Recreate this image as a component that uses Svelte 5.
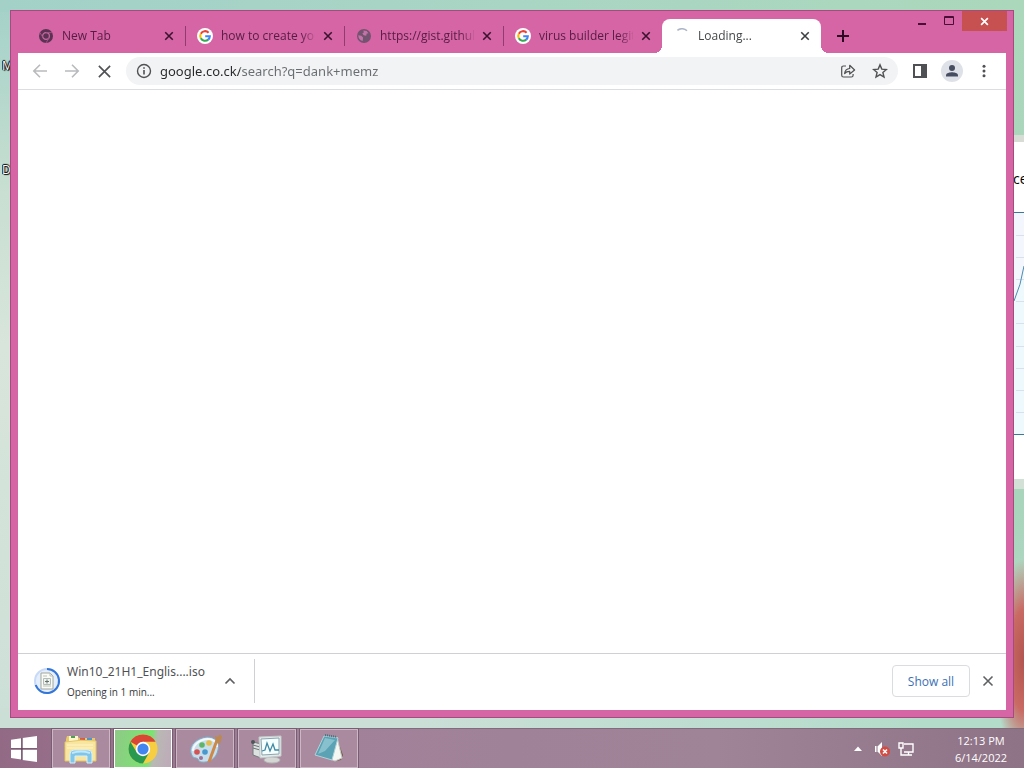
<script lang="ts">
    const tabs = [
        { title: 'New Tab', icon: 'chrome' },
        { title: 'how to create your', icon: 'google' },
        { title: 'https://gist.github', icon: 'globe' },
        { title: 'virus builder legit', icon: 'google' },
        { title: 'Loading...', icon: 'spinner' },
    ];

    let active = $state(4);
    let address = $state('google.co.ck/search?q=dank+memz');

    const apps = ['File Explorer', 'Google Chrome', 'Paint', 'Task Manager', 'Notepad'];
    const gridLines = [235, 257, 279, 301, 323, 346, 368, 390, 412];
</script>

{#snippet cross(size: number, width: number)}
    <svg width={size} height={size} viewBox="0 0 12 12" fill="none" stroke="currentColor" stroke-width={width}>
        <path d="M1.5 1.5l9 9M10.5 1.5l-9 9" />
    </svg>
{/snippet}

{#snippet favicon(name: string)}
    <svg class="favicon" width="16" height="16" viewBox="0 0 16 16" fill="none">
        {#if name === 'chrome'}
            <circle cx="8" cy="8" r="7" fill="#5b3254" />
            <circle cx="8" cy="8" r="3.4" stroke="#c76aa2" stroke-width="1.2" />
            <path d="M8 4.6h6.2M5 9.7L2 4.6M11 9.7L8 15" stroke="#a65588" stroke-width="0.9" />
        {:else if name === 'google'}
            <circle cx="8" cy="8" r="8" fill="#fff" />
            <g stroke-width="2.1">
                <path d="M11.6 4.7A4.8 4.8 0 0 0 3.8 5.7" stroke="#ea4335" />
                <path d="M3.8 5.7A4.8 4.8 0 0 0 3.8 10.3" stroke="#fbbc05" />
                <path d="M3.8 10.3A4.8 4.8 0 0 0 11.2 11.6" stroke="#34a853" />
                <path d="M11.2 11.6A4.8 4.8 0 0 0 12.8 8.2H8.2" stroke="#4285f4" />
            </g>
        {:else if name === 'globe'}
            <circle cx="8" cy="8" r="7" fill="#73536f" />
            <path d="M2.3 7.2l3 .5 1.8 1.8-.4 3.4C3.8 12.4 2.2 10 2.3 7.2zM7.4 2.4l3.2.7 1.9 2.2-1.8.3-.5 2.2-2.5-.5-1.4-1.8 1.5-1z" fill="#c373a8" />
        {:else}
            <path d="M3.4 2.4A7 7 0 0 1 13 2.8" stroke="#aeb6c8" stroke-width="1.5" />
        {/if}
    </svg>
{/snippet}

<div class="desktop">
    <div class="wallpaper-glow"></div>
    <span class="shortcut first">M</span>
    <span class="shortcut second">D</span>

    <div class="monitor">
        <span>ce</span>
        <svg width="10" height="354" viewBox="0 135 10 354">
            <path d="M10 266Q7 285 0 301V434H10z" fill="#eef9fd" />
            {#each gridLines as y}
                <path d="M2 {y}.5H10" stroke="#d9dfeb" />
            {/each}
            <path d="M10 266Q7 285 0 301" fill="none" stroke="#4d8ab0" />
            <path d="M0 212.5H10M0 434.5H10" stroke="#3c7799" />
        </svg>
    </div>

    <main class="window">
        <header class="titlebar">
            <nav class="tabs">
                {#each tabs as tab, i}
                    <div class="tab" class:active={active === i} class:divided={i < 3}>
                        <button class="tab-label" onclick={() => (active = i)}>
                            {@render favicon(tab.icon)}
                            <span class="tab-title">{tab.title}</span>
                        </button>
                        <button class="tab-close" aria-label="Close tab">{@render cross(10, 1.9)}</button>
                    </div>
                {/each}
                <button class="new-tab" aria-label="New tab">
                    <svg width="12" height="12" viewBox="0 0 12 12" stroke="currentColor" stroke-width="2">
                        <path d="M6 0v12M0 6h12" />
                    </svg>
                </button>
            </nav>
            <div class="controls">
                <button aria-label="Minimize">
                    <svg width="12" height="12" viewBox="0 0 12 12"><path d="M2 8h8v2H2z" fill="#4a0d38" /></svg>
                </button>
                <button aria-label="Maximize">
                    <svg width="12" height="12" viewBox="0 0 12 12"><path d="M1.5 1.5h9v8h-9zM1 2.5h10" fill="none" stroke="#4a0d38" /></svg>
                </button>
                <button class="close" aria-label="Close">{@render cross(9, 2.2)}</button>
            </div>
        </header>

        <div class="toolbar">
            <button class="dim" aria-label="Back">
                <svg width="16" height="16" viewBox="0 0 16 16" fill="none" stroke="currentColor" stroke-width="1.6">
                    <path d="M15 8H2M8 1.8L1.8 8 8 14.2" />
                </svg>
            </button>
            <button class="dim" aria-label="Forward">
                <svg width="16" height="16" viewBox="0 0 16 16" fill="none" stroke="currentColor" stroke-width="1.6">
                    <path d="M1 8h13M8 1.8L14.2 8 8 14.2" />
                </svg>
            </button>
            <button aria-label="Stop loading">{@render cross(15, 1.3)}</button>
            <div class="omnibox">
                <button aria-label="Site information">
                    <svg width="16" height="16" viewBox="0 0 16 16" fill="none" stroke="currentColor" stroke-width="1.4">
                        <circle cx="8" cy="8" r="6.5" />
                        <path d="M8 7v4.4M8 4.3v1.5" stroke-width="1.6" />
                    </svg>
                </button>
                <input aria-label="Address" bind:value={address} />
                <button aria-label="Share">
                    <svg width="16" height="16" viewBox="0 0 16 16" fill="none" stroke="currentColor" stroke-width="1.2">
                        <path d="M6 3H3.5Q1.7 3 1.7 4.8v7.4Q1.7 14 3.5 14h7.8q1.8 0 1.8-1.8V11" />
                        <path d="M4.6 10.6C5 7.3 7 5.7 9.7 5.5V2.3L14.6 7 9.7 11V8.4C7.5 8.4 5.8 9 4.6 10.6z" stroke-linejoin="round" />
                    </svg>
                </button>
                <button aria-label="Bookmark this tab">
                    <svg width="16" height="16" viewBox="0 0 16 16" fill="none" stroke="currentColor" stroke-width="1.4">
                        <path d="M8 1.9l1.8 4.2 4.6.4-3.5 3 1.1 4.5L8 11.6 4 14l1.1-4.5-3.5-3 4.6-.4z" />
                    </svg>
                </button>
            </div>
            <button aria-label="Side panel">
                <svg width="16" height="16" viewBox="0 0 16 16">
                    <path d="M1 1h14v14H1zM3 3v10h6V3z" fill="#4f5054" fill-rule="evenodd" />
                </svg>
            </button>
            <button class="avatar" aria-label="Profile">
                <svg width="22" height="22" viewBox="0 0 22 22">
                    <circle cx="11" cy="11" r="11" fill="#dee1e8" />
                    <circle cx="11" cy="8" r="3" fill="#474e62" />
                    <path d="M5 16.5v-1.3C5 13 9 12.2 11 12.2s6 .8 6 3v1.3z" fill="#474e62" />
                </svg>
            </button>
            <button aria-label="Menu">
                <svg width="16" height="16" viewBox="0 0 16 16" fill="#505154">
                    <circle cx="8" cy="3.3" r="1.5" /><circle cx="8" cy="8" r="1.5" /><circle cx="8" cy="12.7" r="1.5" />
                </svg>
            </button>
        </div>

        <section class="page"></section>

        <footer class="downloads">
            <div class="download">
                <svg width="28" height="28" viewBox="0 0 28 28" fill="none">
                    <circle cx="14" cy="14" r="12" fill="#e5eefc" stroke="#c8daf8" stroke-width="2" />
                    <path d="M14 2A12 12 0 1 1 2.7 18" stroke="#3476d8" stroke-width="2" />
                    <path d="M8 6h9l3 3v13H8z" fill="#fafbf7" stroke="#a1a69d" />
                    <path d="M17 6v3h3M10 9h4M10 19h8" stroke="#b9c1b7" />
                    <path d="M10.5 11.5h7v6h-7z" fill="#eff3f0" stroke="#b2bdb9" />
                    <path d="M14 12.5v4M12 14.5h4" stroke="#66716b" />
                </svg>
                <div class="file">
                    <span class="name">Win10_21H1_Englis....iso</span>
                    <span class="status">Opening in 1 min...</span>
                </div>
                <button aria-label="Download options">
                    <svg width="12" height="12" viewBox="0 0 12 12" fill="none" stroke="currentColor" stroke-width="1.7">
                        <path d="M1.5 8.5L6 4l4.5 4.5" />
                    </svg>
                </button>
            </div>
            <button class="show-all">Show all</button>
            <button class="dismiss" aria-label="Close downloads bar">{@render cross(12, 1.6)}</button>
        </footer>
    </main>

    <div class="taskbar">
        <button class="start" aria-label="Start">
            <svg width="28" height="26" viewBox="0 0 28 26" fill="#fff">
                <path d="M1 3.8L11.3 2.3v10H1zM12.5 2.1L27 0v12.3H12.5zM1 13.5h10.3v10L1 22zM12.5 13.5H27V26l-14.5-2.1z" />
                <path d="M11.9 2v22M1 12.9h26" stroke="#5d3f57" />
            </svg>
        </button>
        {#each apps as app, i}
            <button class="app" class:current={i === 1} aria-label={app}>
                <svg width="34" height="32" viewBox="0 0 34 32" fill="none">
                    {#if i === 0}
                        <path d="M2 6l1-3h10l2 2h16v22H2z" fill="#e9c96e" />
                        <path d="M5 3h9v5H5z" fill="#fff5cd" />
                        <path d="M7 3h4v2H7z" fill="#4ba053" />
                        <path d="M16 5h5v2h-5z" fill="#d95b41" />
                        <path d="M23 5h5v2h-5z" fill="#4c95cf" />
                        <path d="M1 9q16-3 31-1v20H1z" fill="#f8e6a0" stroke="#e5c567" />
                        <path d="M3 12h26M3 15h26" stroke="#fff4c6" />
                        <path d="M6 30v-9q0-4 4-4h14q4 0 4 4v9h-5v-7H11v7z" fill="#80c6e8" stroke="#d6effa" />
                        <path d="M8 20q9-3 18 0" stroke="#c4e8f7" stroke-width="2" />
                    {:else if i === 1}
                        <circle cx="17" cy="16" r="14.5" fill="#f7cd42" />
                        <path d="M17 16L4.4 8.8A14.5 14.5 0 0 1 29.6 8.8H17z" fill="#d94635" />
                        <path d="M4.4 8.8A14.5 14.5 0 0 0 17 30.5L23.2 19.6 17 16 10.8 19.6z" fill="#28994e" />
                        <circle cx="17" cy="16" r="7.2" fill="#fff" />
                        <circle cx="17" cy="16" r="5.6" fill="#4285ee" />
                    {:else if i === 2}
                        <path d="M3 20C1 12 9 5 19 4c8 0 13 5 11 13-2 9-9 13-17 12-3 0-2-4-5-4-3 0-4-2-5-5z" fill="#c8deeb" stroke="#80aac5" />
                        <path d="M5 18C5 12 12 6 20 6c5 0 9 3 9 8" stroke="#f2faff" stroke-width="2" />
                        <circle cx="9" cy="19" r="2.8" fill="#d35252" />
                        <circle cx="14" cy="12" r="2.8" fill="#5fb469" />
                        <circle cx="21" cy="10" r="2.8" fill="#e6bd4b" />
                        <circle cx="17" cy="19" r="2.8" fill="#4799ce" />
                        <circle cx="13" cy="25" r="2" fill="#9c7398" />
                        <path d="M29 7L21 29" stroke="#ce8849" stroke-width="3" />
                        <path d="M28 9l-1-6 3 1 2-3 2 3-2 7z" fill="#bd8950" />
                    {:else if i === 3}
                        <path d="M3 9l8 2v14l-8-3z" fill="#dce2df" stroke="#73797c" />
                        <path d="M3 12l7 2M3 15l7 2" stroke="#6d7476" />
                        <circle cx="3" cy="9" r="2" fill="#4f565a" />
                        <ellipse cx="22" cy="27" rx="8" ry="3" fill="#d4d7d4" stroke="#b5b8b7" />
                        <path d="M9 4l22-1v20l-21 2z" fill="#e5ebea" stroke="#c3cacb" />
                        <path d="M11 6l18-1v16l-17 1z" fill="#f5feff" stroke="#8ba5ae" />
                        <path d="M12 18l3-1 2-7 3 8 3-7 2 6h4" stroke="#4189a2" stroke-width="1.3" />
                    {:else}
                        <path d="M25 6l6 16-2 5-5 1z" fill="#735c45" />
                        <path d="M25 4l5 21-7 3-5-2z" fill="#f5f7f2" stroke="#c7ccca" />
                        <path d="M12 3l14 2-6 22L3 22z" fill="#5aa2b4" stroke="#b1d2d9" />
                        <path d="M13 5l10 2-10 11-7 3z" fill="#9bced7" opacity=".7" />
                        <path d="M13 2l12 2" stroke="#3f7280" stroke-width="2" stroke-dasharray="1 1" />
                    {/if}
                </svg>
            </button>
        {/each}
        <div class="tray">
            <button aria-label="Show hidden icons">
                <svg width="16" height="16" viewBox="0 0 16 16"><path d="M4 10l4-4.5L12 10z" fill="#fff" /></svg>
            </button>
            <button aria-label="Volume">
                <svg width="16" height="16" viewBox="0 0 16 16">
                    <path d="M1 5h3l4-4v14l-4-4H1z" fill="#fff" />
                    <path d="M3 5v6" stroke="#8e7286" />
                    <circle cx="11" cy="10.5" r="5" fill="#d44b42" />
                    <path d="M9 8.5l4 4M13 8.5l-4 4" stroke="#fff" stroke-width="1.6" />
                </svg>
            </button>
            <button aria-label="Network">
                <svg width="16" height="16" viewBox="0 0 16 16" fill="none" stroke="#fff" stroke-width="1.4">
                    <path d="M6 3h9v8H6M10.5 11v3M6 14h8M1 2h4v5H1zM3 7v7h3" />
                </svg>
            </button>
        </div>
        <div class="clock">
            <span>12:13 PM</span>
            <span>6/14/2022</span>
        </div>
    </div>
</div>

<style>
    :global(body) {
        margin: 0;
    }

    .desktop {
        position: relative;
        display: flex;
        flex-direction: column;
        min-height: 100vh;
        overflow: hidden;
        font-family: "Open Sans", "Noto Sans", sans-serif;
        font-size: 12px;
        background: linear-gradient(to right, #cbdfd7 0, #cbdfd7 40%, #b4dccb 90%) bottom / 100% 60px no-repeat,
            linear-gradient(to right, #a3d1c8, #a9d5c4 50%, #abd8bb) top / 100% 12px no-repeat,
            linear-gradient(to bottom, #a3d1c8, #c8dfd1 25%, #d8e5da 45%, #cbdfd7) left / 50% 100% no-repeat,
            linear-gradient(to bottom, #abd8bb, #a8d5bc 65%, #c0d9cc);
    }

    button {
        display: flex;
        align-items: center;
        justify-content: center;
        flex-shrink: 0;
        padding: 0;
        border: none;
        background: none;
        color: inherit;
        font: inherit;
    }

    svg {
        display: block;
        flex-shrink: 0;
    }

    .wallpaper-glow {
        position: absolute;
        right: 0;
        bottom: 40px;
        width: 30px;
        height: 170px;
        background: radial-gradient(ellipse at 100% 60%, #b45450 0, #c96a64 35%, transparent 70%);
    }

    .shortcut {
        position: absolute;
        left: 2px;
        width: 8px;
        overflow: hidden;
        color: #fff;
        line-height: 16px;
        text-shadow: 0 0 1px #000, 1px 1px 1px #000, -1px 0 1px #000, 0 -1px 1px #000;
    }

    .first {
        top: 58px;
    }

    .second {
        top: 162px;
    }

    .monitor {
        position: absolute;
        top: 135px;
        right: 0;
        width: 10px;
        height: 354px;
        overflow: hidden;
        background: linear-gradient(#d7ddd5 0, #d7ddd5 7px, #fff 7px, #fff 77px, #f4f6fe 77px, #f4f6fe 299px, #fff 299px, #fff 344px, #d3e0d6 344px);
    }

    .monitor span {
        position: absolute;
        top: 34px;
        left: -1px;
        font-size: 14px;
        line-height: 20px;
    }

    .monitor svg {
        position: relative;
    }

    .window {
        position: relative;
        display: flex;
        flex: 1;
        flex-direction: column;
        margin: 10px;
        padding: 0 7px 7px;
        border: 1px solid #a54b7e;
        background: #d565a4;
    }

    .titlebar {
        display: flex;
        justify-content: space-between;
        height: 42px;
        margin-right: -1px;
    }

    .tabs {
        display: flex;
        align-items: flex-end;
        min-width: 0;
        padding-left: 8px;
    }

    .tab {
        position: relative;
        display: flex;
        align-items: center;
        box-sizing: border-box;
        width: 159px;
        height: 34px;
        padding: 0 8px 0 12px;
        color: #561c45;
    }

    .divided::after {
        content: "";
        position: absolute;
        right: -1px;
        top: 7px;
        width: 1px;
        height: 20px;
        background: #923b70;
    }

    .tab-label {
        flex: 1;
        justify-content: flex-start;
        gap: 8px;
        min-width: 0;
        height: 100%;
    }

    .tab-title {
        width: 94px;
        overflow: hidden;
        line-height: 18px;
        text-align: left;
        white-space: nowrap;
        mask-image: linear-gradient(to right, #000 80px, transparent 96px);
    }

    .tab-close {
        width: 16px;
        height: 16px;
        color: #3b1230;
    }

    .active {
        border-radius: 8px 8px 0 0;
        background: #fff;
        color: #45474a;
    }

    .active .tab-close {
        color: #3c4043;
    }

    .active::before,
    .active::after {
        content: "";
        position: absolute;
        bottom: 0;
        width: 8px;
        height: 8px;
    }

    .active::before {
        left: -8px;
        background: radial-gradient(circle at 0 0, transparent 8px, #fff 8px);
    }

    .active::after {
        right: -8px;
        background: radial-gradient(circle at 100% 0, transparent 8px, #fff 8px);
    }

    .new-tab {
        width: 28px;
        height: 34px;
        margin-left: 8px;
        color: #2d0822;
    }

    .controls {
        display: flex;
        align-items: flex-start;
    }

    .controls button {
        width: 27px;
        height: 20px;
    }

    .controls .close {
        width: 45px;
        background: #c75050;
        color: #fff;
    }

    .toolbar {
        display: flex;
        align-items: center;
        box-sizing: border-box;
        height: 37px;
        padding: 0 6px;
        border-bottom: 1px solid #dcdde0;
        background: #fff;
        color: #505154;
    }

    .toolbar button {
        width: 32px;
        height: 28px;
    }

    .toolbar .dim {
        color: #b9babd;
    }

    .omnibox {
        display: flex;
        flex: 1;
        align-items: center;
        box-sizing: border-box;
        min-width: 0;
        height: 28px;
        margin: 0 6px;
        padding: 0 2px;
        border-radius: 14px;
        background: #f1f3f4;
    }

    .omnibox input {
        flex: 1;
        min-width: 0;
        padding: 0;
        border: none;
        outline: none;
        background: linear-gradient(to right, #26282b 80px, #696c70 80px);
        background-clip: text;
        color: transparent;
        caret-color: #26282b;
        font-family: "Noto Sans", sans-serif;
        font-size: 13px;
        line-height: 20px;
    }

    .page {
        flex: 1;
        background: #fff;
    }

    .downloads {
        display: flex;
        align-items: center;
        box-sizing: border-box;
        height: 57px;
        padding: 0 6px 2px 15px;
        border-top: 1px solid #cfd0d3;
        background: #fff;
        color: #5f6063;
    }

    .download {
        display: flex;
        align-items: center;
        box-sizing: border-box;
        width: 222px;
        height: 44px;
        margin-right: auto;
        border-right: 1px solid #cfd0d3;
    }

    .file {
        display: flex;
        flex-direction: column;
        width: 151px;
        margin-left: 6px;
        white-space: nowrap;
    }

    .name {
        color: #505154;
        font-family: "Noto Sans", sans-serif;
        line-height: 22px;
    }

    .status {
        color: #37383a;
        font-size: 10px;
        line-height: 18px;
    }

    .download button {
        width: 24px;
        height: 24px;
    }

    .show-all {
        width: 78px;
        height: 32px;
        border: 1px solid #dadce0;
        border-radius: 4px;
        color: #3c6fb4;
        font-weight: 500;
    }

    .dismiss {
        width: 24px;
        height: 24px;
        margin-left: 6px;
    }

    .taskbar {
        position: relative;
        display: flex;
        gap: 4px;
        box-sizing: border-box;
        height: 40px;
        border-top: 1px solid #806d7b;
        background: linear-gradient(to right, #936a85, #a1819a 30%, #9f8396 70%, #8e7286);
        color: #fff;
    }

    .start {
        width: 48px;
    }

    .app {
        box-sizing: border-box;
        width: 58px;
        height: 39px;
        border: 1px solid #cdb6c6;
        outline: 1px solid #775e71;
        background: #a98a9f;
    }

    .current {
        border: 1px solid #fff;
        background: linear-gradient(100deg, #8fc987 0, #79e56f 60%, #b9b9b4 70%, #bfa9ba);
    }

    .tray {
        display: flex;
        align-items: center;
        gap: 8px;
        margin-left: auto;
    }

    .tray button {
        width: 16px;
        height: 24px;
    }

    .clock {
        display: flex;
        flex-direction: column;
        align-items: center;
        justify-content: center;
        width: 106px;
        padding-left: 20px;
        box-sizing: border-box;
        font-size: 11px;
        line-height: 17px;
    }
</style>
